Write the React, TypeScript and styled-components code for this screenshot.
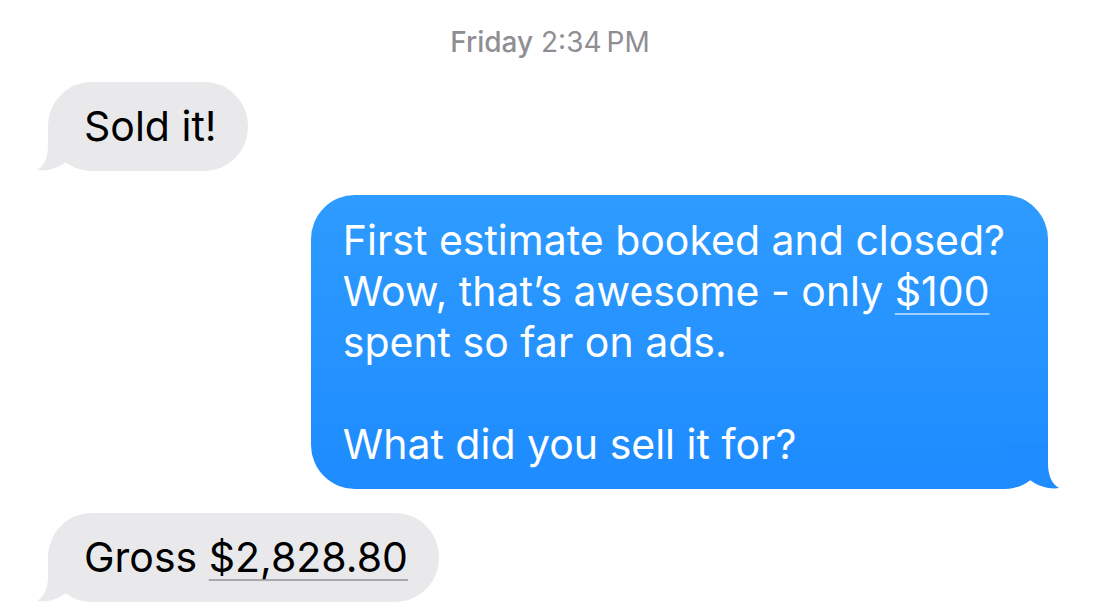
import React from 'react'
import styled, { createGlobalStyle } from 'styled-components'

const GlobalStyle = createGlobalStyle`
  html, body {
    margin: 0;
    padding: 0;
    background: #fff;
  }
  body {
    font-family: Inter, "Noto Sans", "Liberation Sans", sans-serif;
    -webkit-font-smoothing: antialiased;
  }
`

const Thread = styled.div`
  width: 1100px;
  height: 614px;
  overflow: hidden;
  display: flex;
  flex-direction: column;
  gap: 24px;
  padding: 27px 52px 0 48px;
  box-sizing: border-box;
`

const Stamp = styled.div`
  align-self: center;
  margin-left: 4px;
  margin-bottom: 1px;
  font-size: 28px;
  line-height: 30px;
  color: #8e8e93;

  b {
    font-weight: 500;
  }
`

const Bubble = styled.div<{ $me?: boolean }>`
  position: relative;
  isolation: isolate;
  align-self: ${p => (p.$me ? 'flex-end' : 'flex-start')};
  padding: ${p => (p.$me ? '20px 43px 19px 32px' : '19px 31px 19px 36px')};
  border-radius: 44px;
  background: ${p => (p.$me ? 'linear-gradient(#2e9bff, #1e8bff)' : '#e9e9eb')};
  color: ${p => (p.$me ? '#fff' : '#000')};
  font-size: 41px;
  line-height: 51px;
  white-space: nowrap;
`

const Amount = styled.span<{ $me?: boolean }>`
  text-decoration: underline;
  text-decoration-thickness: 2px;
  text-underline-offset: 7px;
  text-decoration-color: ${p => (p.$me ? 'rgba(255,255,255,0.55)' : '#a8a8ad')};
`

const Tail = styled.svg<{ $me?: boolean }>`
  position: absolute;
  z-index: -1;
  bottom: -1px;
  width: 60px;
  height: 54px;
  ${p => (p.$me ? 'right: -12px; transform: scaleX(-1);' : 'left: -12px;')}
`

function BubbleTail({ me }: { me?: boolean }) {
  return (
    <Tail $me={me} viewBox="0 0 60 54">
      <path
        d="M12 8 L12 27 C12 40 8 48 1 52 C9 53.5 21 51 30 44 C36 49 44 52 58 53 L58 8 Z"
        fill={me ? '#1e8bff' : '#e9e9eb'}
      />
    </Tail>
  )
}

export default function App() {
  return (
    <>
      <GlobalStyle />
      <Thread>
        <Stamp>
          <b>Friday</b> 2:34&#8201;PM
        </Stamp>

        <Bubble>
          <BubbleTail />
          Sold it!
        </Bubble>

        <Bubble $me>
          <BubbleTail me />
          First estimate booked and closed?
          <br />
          Wow, that’s awesome - only <Amount $me>$100</Amount>
          <br />
          spent so far on ads.
          <br />
          <br />
          What did you sell it for?
        </Bubble>

        <Bubble>
          <BubbleTail />
          Gross <Amount>$2,828.80</Amount>
        </Bubble>
      </Thread>
    </>
  )
}
